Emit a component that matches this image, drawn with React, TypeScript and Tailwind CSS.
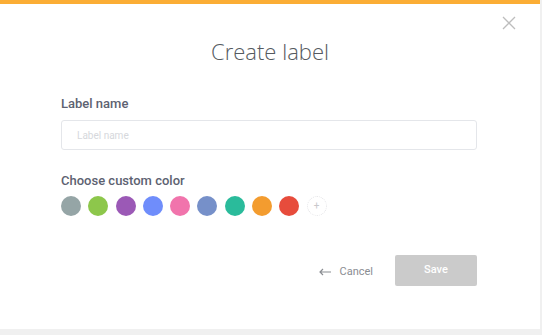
import React from "react";

const colors = ["#95a5a6", "#8dc74b", "#9b59b6", "#6f8dfb", "#f174ac", "#7690c9", "#2abb9b", "#f39c2f", "#e74c3c"];

export default function App() {
  return (
    <div className="w-[542px] h-[335px] bg-[#f0f0f0] overflow-hidden" style={{ fontFamily: "Roboto, 'Noto Sans', sans-serif" }}>
      <div className="w-[540px] h-[329px] bg-white border-t-4 border-[#fbad35] flex flex-col relative">
        <button className="absolute right-[24px] top-[12px] w-[14px] h-[14px] text-[#bdbdbd]">
          <svg viewBox="0 0 14 14" width="14" height="14" fill="none" stroke="currentColor" strokeWidth="1.3">
            <path d="M1 1L13 13M13 1L1 13" />
          </svg>
        </button>
        <h1 className="text-center text-[22px] font-light text-[#555a60] mt-[32px] leading-[30px]" style={{ fontFamily: "'Open Sans', sans-serif" }}>
          Create label
        </h1>
        <div className="pl-[61px] pr-[63px] mt-[30px]">
          <div className="text-[13px] font-medium text-[#5d6271] leading-[16px]">Label name</div>
          <div className="mt-[8px] h-[30px] border border-[#e4e6ea] rounded-[3px] flex items-center px-[15px]">
            <span className="text-[10px] text-[#d6d8dc]">Label name</span>
          </div>
          <div className="mt-[23px] text-[13px] font-medium text-[#5d6271] leading-[16px]">Choose custom color</div>
          <div className="mt-[7px] flex gap-[7.3px]">
            {colors.map((c) => (
              <div key={c} className="w-5 h-5 rounded-full" style={{ backgroundColor: c }} />
            ))}
            <div className="w-5 h-5 rounded-full border border-dotted border-[#e3e3e6] flex items-center justify-center text-[#c8c8cc] text-[10px] leading-none">+</div>
          </div>
          <div className="mt-[39px] flex justify-end items-center gap-[22px]">
            <button className="flex items-center gap-[9px] text-[11px] text-[#8a8d92] mt-[3px]">
              <svg width="12" height="8" viewBox="0 0 12 8" fill="none" stroke="currentColor" strokeWidth="1.2">
                <path d="M12 4H1M4 1L1 4L4 7" />
              </svg>
              Cancel
            </button>
            <button className="w-[82px] h-[31px] bg-[#cbcbcb] rounded-[2px] text-white text-[11px] font-medium">Save</button>
          </div>
        </div>
      </div>
    </div>
  );
}
